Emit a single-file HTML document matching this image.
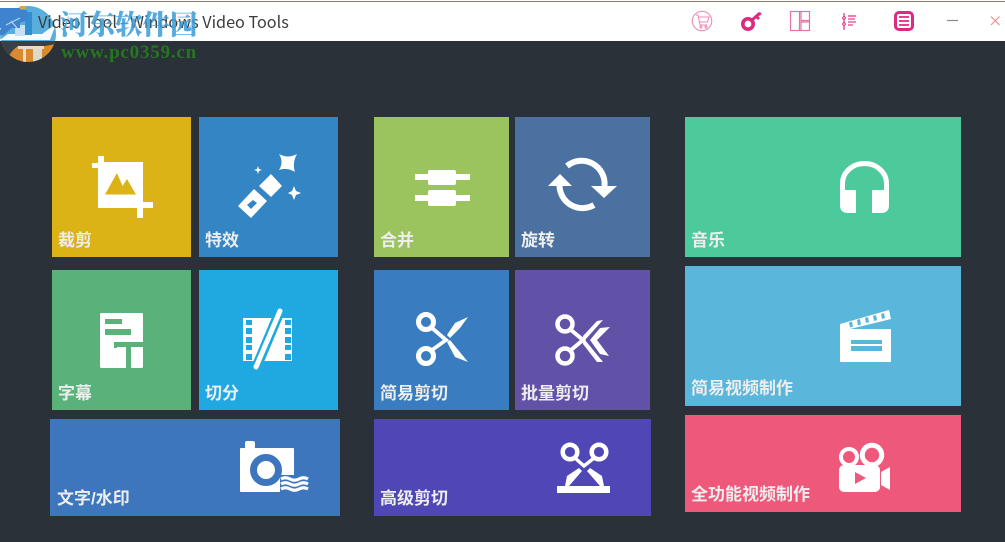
<!DOCTYPE html>
<html><head><meta charset="utf-8"><style>
html,body{margin:0;padding:0;width:1005px;height:542px;overflow:hidden;background:#2b3138}
svg{position:absolute;left:0;top:0}
.t{font-family:"Liberation Sans","Noto Sans CJK SC",sans-serif;font-weight:700;font-size:17px;fill:#eeeeee}
</style></head><body>
<svg width="1005" height="542" viewBox="0 0 1005 542" xmlns="http://www.w3.org/2000/svg">
<rect width="1005" height="41" fill="#fff"/>
<rect y="1" width="1005" height="1" fill="#9069bb"/>

<!-- watermark logo -->
<clipPath id="lg"><circle cx="28" cy="34" r="28"/></clipPath>
<g clip-path="url(#lg)">
<rect x="0" y="41" width="56" height="22" fill="#d98a2c"/>
<path d="M0 41H56V44L45 46H18Q12 50 9 56L0 56Z" fill="#3a4048"/>
<rect x="18" y="46" width="26" height="3" fill="#e6dccb"/>
<rect x="23" y="49" width="3" height="14" fill="#e6dccb"/>
<rect x="33" y="49" width="9" height="14" fill="#ddd8ce"/>
<rect x="0" y="5" width="56" height="36" fill="#5aaede"/>
<path d="M0 40H50L56 24L42 34H8Z" fill="#f6fafd"/>
<rect x="15" y="25" width="10" height="11" fill="#c9e0f4"/>
<path d="M25 12L32 12V35H25Z" fill="#2f8fd0"/>
</g>
<rect x="0" y="8" width="20" height="20" fill="#3f83cf"/>
<path d="M0 30L20 10H27V20L15 25L4 35H0Z" fill="#3f83cf"/>
<path d="M6 25l14-7M11 21l6 7" stroke="#b9d3ee" stroke-width="1.200" fill="none"/>
<rect x="20" y="6" width="6" height="3" fill="#d8a83a"/>

<text x="38" y="28" font-family="'Noto Sans CJK SC',sans-serif" font-size="16.200" fill="#3c3c3c">Video Tool - Windows Video Tools</text>

<!-- toolbar -->
<g fill="none" stroke="#ee8ab8" stroke-width="1.100">
<circle cx="702" cy="21" r="9.700"/>
<path d="M696 15h2l2 10h7M699 17h10l-1.500 5h-8"/><circle cx="701" cy="27" r="1"/><circle cx="706" cy="27" r="1"/>
</g>
<g fill="none" stroke="#dc2a80">
<circle cx="748" cy="24" r="5.200" stroke-width="3.600"/>
<path d="M752 20l8-7M756 16l3 3M759 13l1.500 2" stroke-width="3"/>
</g>
<g fill="none" stroke="#e873a8" stroke-width="1.200">
<rect x="790.500" y="11.500" width="19" height="19"/><path d="M799.500 11v20M801 11v20M801 20.500h9M801 22h9"/>
</g>
<g fill="none" stroke="#dc2a80">
<path d="M844 13v17" stroke-width="1.200"/><circle cx="844" cy="18" r="1.300" stroke-width="1" fill="#fff"/><circle cx="844" cy="24" r="1.300" stroke-width="1" fill="#fff"/>
<path d="M848 16h8" stroke-width="1.200"/>
<path d="M848 19h7M848 22h8M848 25h5" stroke="#e9609f" stroke-width="1.400"/>
<rect x="895.500" y="12.500" width="17" height="17" rx="3.500" stroke-width="3"/>
<path d="M899 17h10M899 21h10M899 25h10" stroke-width="1.800"/>
</g>
<path d="M947 20.500h11" stroke="#8a8a8a" stroke-width="1.200"/>
<path d="M991 16.500l8.500 8.500M999.500 16.500l-8.500 8.500" stroke="#f58e8e" stroke-width="1.200"/>

<!-- tiles -->
<rect x="52" y="117" width="139" height="140" fill="#dbb317"/>
<rect x="199" y="117" width="139" height="140" fill="#3385c4"/>
<rect x="52" y="270" width="139" height="140" fill="#5ab27a"/>
<rect x="199" y="270" width="139" height="140" fill="#20a9e0"/>
<rect x="50" y="419" width="290" height="97" fill="#3e76bd"/>
<rect x="374" y="117" width="135" height="140" fill="#9bc45f"/>
<rect x="515" y="117" width="135" height="140" fill="#4a71a0"/>
<rect x="374" y="270" width="135" height="140" fill="#397cbf"/>
<rect x="515" y="270" width="135" height="140" fill="#6151a7"/>
<rect x="374" y="419" width="277" height="97" fill="#5047b7"/>
<rect x="685" y="117" width="276" height="140" fill="#4dca9b"/>
<rect x="685" y="266" width="276" height="140" fill="#5ab6da"/>
<rect x="685" y="415" width="276" height="97" fill="#ee597b"/>

<!-- crop -->
<g fill="#fff">
<rect x="98" y="162" width="45" height="46"/><rect x="92" y="163" width="6" height="5"/><rect x="98" y="156" width="6" height="6"/>
<rect x="143" y="202" width="10" height="6"/><rect x="137" y="208" width="6" height="10"/>
</g>
<path d="M105 194.500L117 173L122.500 186L127 179L136 194.500Z" fill="#dbb317"/>

<!-- wand -->
<g fill="#fff">
<path d="M238 206L254 189L267 201L251 218Z"/><path d="M259 186L271 174L282 186L271 197Z"/>
<path d="M279 154Q288 159 297 154Q292 163 295 172Q287 167 279 170Q284 162 279 154Z"/>
<path d="M294 186L296 191L301 193L296 195L294 200L292 195L288 193L292 191Z"/>
<path d="M258 166L259 169L262 170L259 171L258 174L257 171L254 170L257 169Z"/>
</g>
<path d="M247 205L253 200L257 203L251 209Z" fill="#3385c4"/>

<!-- subtitle -->
<rect x="100" y="313" width="43" height="55" rx="1.500" fill="#fff"/>
<g fill="#5ab27a"><rect x="105" y="319" width="17" height="5"/><rect x="105" y="329" width="26" height="6"/><rect x="114" y="342" width="29" height="5"/><rect x="114" y="342" width="3" height="6"/><rect x="126" y="347" width="5" height="21"/></g>

<!-- film split -->
<rect x="243" y="318" width="49" height="43" fill="#fff"/>
<g fill="#20a9e0">
<rect x="246" y="320" width="6" height="5"/><rect x="246" y="328" width="6" height="6"/><rect x="246" y="337" width="6" height="6"/><rect x="246" y="345" width="6" height="5"/><rect x="246" y="354" width="6" height="6"/>
<rect x="285" y="320" width="6" height="5"/><rect x="285" y="328" width="6" height="6"/><rect x="285" y="337" width="6" height="6"/><rect x="285" y="345" width="6" height="5"/><rect x="285" y="354" width="6" height="6"/>
</g>
<path d="M280 311L256 368" stroke="#20a9e0" stroke-width="10"/>
<path d="M280 311L256 367" stroke="#fff" stroke-width="5" stroke-linecap="round"/>

<!-- camera -->
<g fill="#fff"><rect x="240" y="448" width="54" height="44" rx="1"/><rect x="245" y="441" width="10" height="8" rx="2"/></g>
<circle cx="266" cy="470" r="12.500" fill="#fff" stroke="#3e76bd" stroke-width="7"/>
<rect x="280" y="475" width="30" height="18" fill="#3e76bd"/>
<g fill="none" stroke="#fff" stroke-width="3.200">
<path d="M281 479q4.500-2.500 9 0t9 0t9 0"/><path d="M281 484q4.500-2.500 9 0t9 0t9 0"/><path d="M281 489q4.500-2.500 9 0t9 0t9 0"/>
</g>

<!-- merge -->
<g fill="#fff"><rect x="415" y="174" width="55" height="6"/><rect x="428" y="170" width="28" height="15" rx="2"/><rect x="415" y="195" width="55" height="6"/><rect x="428" y="190" width="28" height="16" rx="2"/></g>

<!-- rotate -->
<g fill="none" stroke="#fff" stroke-width="6">
<path d="M567 166A23 23 0 0 1 604.500 186"/><path d="M559.500 186A23 23 0 0 0 594 205"/>
</g>
<path d="M591 186H617L604 198Z M548 186H572L560 174Z" fill="#fff"/>

<!-- scissors -->
<g fill="none" stroke="#fff" stroke-width="5"><circle cx="426" cy="322" r="7.500"/><circle cx="426" cy="356" r="7.500"/></g>
<path d="M432 328L446 340L432 350" fill="none" stroke="#fff" stroke-width="3.800"/>
<path d="M447 335L455 323L468 317L460 328L450 338Z M447 342L450 340L468 362L455 357Z" fill="#fff"/>

<!-- batch scissors -->
<g fill="none" stroke="#fff" stroke-width="4.500"><circle cx="565" cy="324" r="7.500"/><circle cx="565" cy="356" r="7.500"/></g>
<path d="M571 330L583 340L571 350" fill="none" stroke="#fff" stroke-width="4"/>
<path d="M583 336L597 321L603 320L585 340L603 362L597 362L583 344Z" fill="#fff"/>
<path d="M590 340L600 328L610 327L597 340L609 356L600 354Z" fill="#fff"/>

<!-- advanced scissors -->
<g fill="none" stroke="#fff" stroke-width="4.500"><circle cx="570" cy="452" r="7.300"/><circle cx="599" cy="452" r="7.300"/></g>
<path d="M575 458L584 466L594 458" fill="none" stroke="#fff" stroke-width="3.500"/>
<path d="M579 468L582 471L569 486L565 486L567 476Z M590 468L587 471L600 486L604 486L602 476Z" fill="#fff"/>
<rect x="557" y="486" width="53" height="7" fill="#fff"/>

<!-- headphones -->
<path d="M842.500 192V183.500A22 20 0 0 1 886.500 183.500V192" fill="none" stroke="#fff" stroke-width="5"/>
<path d="M840 190H856V213H848Q840 213 840 205Z M872 190H889V205Q889 213 881 213H872Z" fill="#fff"/>

<!-- clapper -->
<rect x="840" y="329" width="51" height="33" rx="1" fill="#fff"/>
<rect x="851" y="340" width="31" height="4" fill="#5ab6da"/><rect x="851" y="346" width="31" height="5" fill="#5ab6da"/>
<path d="M840 324L889 310L891 319L846 330L840 335Z" fill="#fff"/>
<g fill="#5ab6da"><path d="M849 322.500L852 321.500L853 326.500L850 327.500Z M857 320L860 319L861 324.500L858 325.500Z M865 318L868 317L869 322L866 323Z M873 316L876 315L877 320L874 321Z M881 314L884 313L885 318L882 319Z"/></g>

<!-- video camera -->
<g fill="none" stroke="#fff"><circle cx="849" cy="457" r="8" stroke-width="4"/><circle cx="872" cy="455" r="9.700" stroke-width="5"/></g>
<rect x="839" y="465" width="41" height="27" rx="5" fill="#fff"/>
<path d="M881 472L890 467V490L881 485Z" fill="#fff"/>
<path d="M855 472L866 478L855 484Z" fill="#ee597b"/>

<!-- labels -->
<g class="t">
<text class="t" x="58" y="246">裁剪</text>
<text class="t" x="205" y="246">特效</text>
<text class="t" x="58" y="399">字幕</text>
<text class="t" x="205" y="399">切分</text>
<text class="t" x="57" y="504">文字/水印</text>
<text class="t" x="380" y="246">合并</text>
<text class="t" x="521" y="246">旋转</text>
<text class="t" x="380" y="399">简易剪切</text>
<text class="t" x="521" y="399">批量剪切</text>
<text class="t" x="380" y="504">高级剪切</text>
<text class="t" x="691" y="246">音乐</text>
<text class="t" x="691" y="394">简易视频制作</text>
<text class="t" x="691" y="500">全功能视频制作</text>
</g>

<text x="60" y="34" font-family="'Noto Serif CJK SC',serif" font-weight="900" font-size="27.500" fill="#3d9fd9" fill-opacity=".88">河东软件园</text>
<text x="61" y="58" font-family="'Liberation Serif',serif" font-weight="700" font-size="19" letter-spacing=".8" fill="#24761f">www.pc0359.cn</text>
</svg>
</body></html>
